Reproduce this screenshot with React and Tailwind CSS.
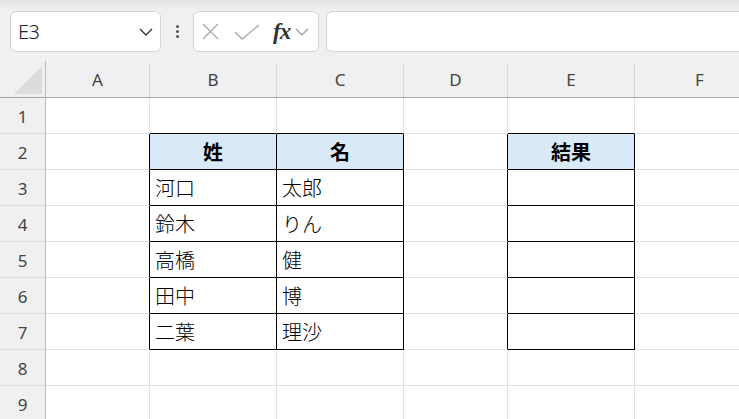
import React from "react";

const cols = [
  { key: "A", w: "w-[104px]" },
  { key: "B", w: "w-[127px]" },
  { key: "C", w: "w-[127px]" },
  { key: "D", w: "w-[104px]" },
  { key: "E", w: "w-[127px]" },
  { key: "F", w: "w-[130px]" },
];

const data = {
  "2B": { t: "姓", h: true },
  "2C": { t: "名", h: true },
  "2E": { t: "結果", h: true },
  "3B": { t: "河口" },
  "3C": { t: "太郎" },
  "4B": { t: "鈴木" },
  "4C": { t: "りん" },
  "5B": { t: "高橋" },
  "5C": { t: "健" },
  "6B": { t: "田中" },
  "6C": { t: "博" },
  "7B": { t: "二葉" },
  "7C": { t: "理沙" },
};

function inTable(r, ci) {
  if (r < 2 || r > 7) return false;
  return ci === 1 || ci === 2 || ci === 4;
}

const FONT = { fontFamily: '"Noto Sans","Noto Sans CJK JP",sans-serif' };

export default function App() {
  const rows = [1, 2, 3, 4, 5, 6, 7, 8, 9];
  return (
    <div
      className="w-[739px] h-[419px] overflow-hidden bg-[#f0f0f0] flex flex-col"
      style={FONT}
    >
      <div className="h-[9px] shrink-0 bg-gradient-to-b from-[#e2e2e2] to-[#eeeeee]" />
      {/* formula bar */}
      <div className="mt-[2px] h-[41px] shrink-0 flex items-stretch">
        <div className="ml-[10px] w-[151px] bg-white border border-[#d4d4d4] rounded-[6px] flex items-center justify-between pl-[7px] pr-[7px]">
          <span className="text-[20px] font-light text-[#222] leading-none tracking-[-0.5px]">E3</span>
          <svg width="14" height="8" viewBox="0 0 14 8">
            <polyline points="1,1 7,7 13,1" fill="none" stroke="#333" strokeWidth="1.4" />
          </svg>
        </div>
        <div className="w-[32px] flex flex-col items-center justify-center gap-[2px]">
          <div className="w-[3px] h-[3px] rounded-full bg-[#555]" />
          <div className="w-[3px] h-[3px] rounded-full bg-[#555]" />
          <div className="w-[3px] h-[3px] rounded-full bg-[#555]" />
        </div>
        <div className="w-[126px] bg-white border border-[#d4d4d4] rounded-[6px] flex items-center pl-[7px]">
          <svg width="19" height="19" viewBox="0 0 19 19">
            <line x1="2" y1="2" x2="17" y2="17" stroke="#a8a8a8" strokeWidth="1.3" />
            <line x1="17" y1="2" x2="2" y2="17" stroke="#a8a8a8" strokeWidth="1.3" />
          </svg>
          <svg width="26" height="16" viewBox="0 0 26 16" className="ml-[14px]">
            <polyline points="1,8 8,15 25,1" fill="none" stroke="#a8a8a8" strokeWidth="1.3" />
          </svg>
          <span
            className="ml-[13px] text-[23px] italic font-bold text-[#333] leading-none tracking-[-1px]"
            style={{ fontFamily: '"Liberation Serif",serif' }}
          >
            fx
          </span>
          <svg width="14" height="8" viewBox="0 0 14 8" className="ml-[5px]">
            <polyline points="1,1 7,7 13,1" fill="none" stroke="#999" strokeWidth="1.2" />
          </svg>
        </div>
        <div className="ml-[7px] flex-1 -mr-[10px] bg-white border border-[#d4d4d4] rounded-l-[6px]" />
      </div>
      {/* sheet */}
      <div className="mt-[9px] flex flex-col">
        {/* column header */}
        <div className="flex h-[37px] border-b border-[#a8a8a8]">
          <div className="w-[46px] shrink-0 border-r border-[#bdbdbd] relative">
            <svg width="29" height="28" viewBox="0 0 29 28" className="absolute left-[14px] top-[5px]">
              <polygon points="28,0 28,28 0,28" fill="#dcdcdc" />
            </svg>
          </div>
          {cols.map((c) => (
            <div
              key={c.key}
              className={`${c.w} shrink-0 border-r border-[#d9d9d9] flex items-center justify-center text-[17px] text-[#444] mt-[2px]`}
            >
              {c.key}
            </div>
          ))}
        </div>
        {rows.map((r) => (
          <div key={r} className="flex h-[36px]">
            <div className="w-[46px] shrink-0 border-r border-[#bdbdbd] border-b border-b-[#dcdcdc] flex items-center justify-center text-[17px] text-[#444] pt-[2px]">
              {r}
            </div>
            {cols.map((c, ci) => {
              const cell = data[`${r}${c.key}`];
              const rightBlack = inTable(r, ci) || inTable(r, ci + 1);
              const bottomBlack = inTable(r, ci) || inTable(r + 1, ci);
              const header = cell && cell.h;
              const isTableHeader = inTable(r, ci) && r === 2;
              return (
                <div
                  key={c.key}
                  className={`${c.w} shrink-0 border-r border-b ${
                    rightBlack ? "border-r-black" : "border-r-[#e1e1e1]"
                  } ${bottomBlack ? "border-b-black" : "border-b-[#e1e1e1]"} ${
                    isTableHeader ? "bg-[#dae9f8]" : "bg-white"
                  } flex items-center ${
                    header ? "justify-center font-bold" : "justify-start pl-[5px] font-light"
                  } text-[20px] text-black leading-none`}
                  style={{ fontFamily: '"Noto Sans CJK JP",sans-serif' }}
                >
                  {cell ? cell.t : ""}
                </div>
              );
            })}
          </div>
        ))}
      </div>
    </div>
  );
}
